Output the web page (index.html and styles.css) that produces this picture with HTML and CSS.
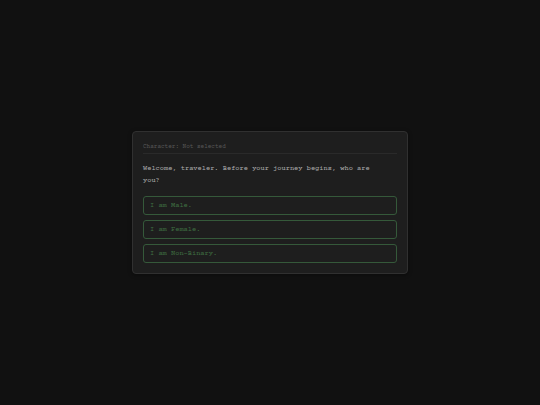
FILE: index.html
```
<!DOCTYPE html>
<html lang="en">
<head>
    <meta charset="UTF-8">
    <meta name="viewport" content="width=device-width, initial-scale=1.0">
    <title>Text Adventure</title>
    <link rel="stylesheet" href="styles.css">
</head>
<body>
    <main class="game">
        <div class="status">Character: Not selected</div>
        <p class="story">Welcome, traveler. Before your journey begins, who are<br>you?</p>
        <div class="options">
            <button type="button" class="option">I am Male.</button>
            <button type="button" class="option">I am Female.</button>
            <button type="button" class="option">I am Non-Binary.</button>
        </div>
    </main>
</body>
</html>
```
FILE: styles.css
```
* {
    box-sizing: border-box;
}

body {
    margin: 0;
    min-height: 100vh;
    display: flex;
    justify-content: center;
    align-items: center;
    background-color: #111;
    color: #b0b0b0;
    font-family: "Courier Prime", "Courier New", "Liberation Mono", monospace;
}

.game {
    width: 100%;
    max-width: 276px;
    padding: 10px;
    background-color: #1e1e1e;
    border: 1px solid #303030;
    border-radius: 4px;
    box-shadow: 0 1px 4px rgba(0, 0, 0, 0.4);
}

.status {
    padding-bottom: 1px;
    border-bottom: 1px solid #2a2a2a;
    color: #585858;
    font-size: 6px;
    line-height: 10px;
}

.story {
    margin: 9px 0;
    font-size: 7px;
    line-height: 12px;
}

.options {
    display: flex;
    flex-direction: column;
    gap: 5px;
}

.option {
    padding: 4px 6px;
    background-color: transparent;
    border: 1px solid #35593a;
    border-radius: 3px;
    color: #3f7042;
    font-family: inherit;
    font-size: 7px;
    line-height: 9px;
    text-align: left;
    cursor: pointer;
}

.option:hover {
    background-color: #263a28;
}
```
